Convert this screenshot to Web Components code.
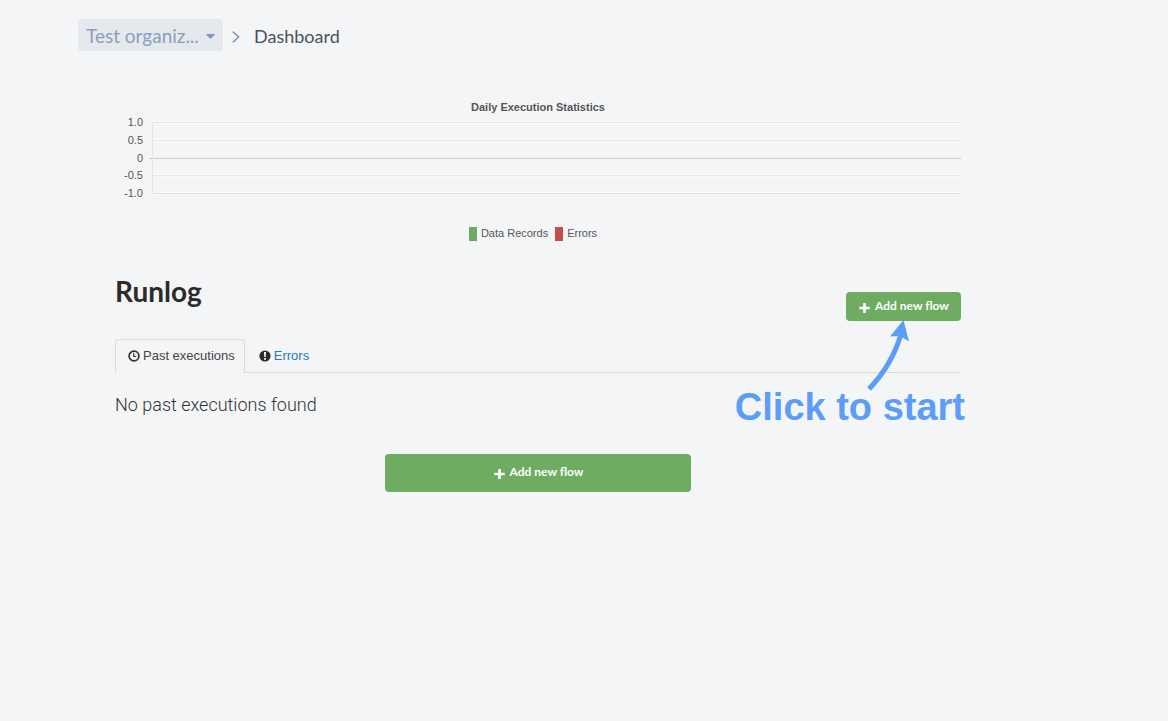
<!DOCTYPE html>
<html lang="en">
<head>
<meta charset="utf-8">
<meta name="viewport" content="width=device-width, initial-scale=1">
<title>Dashboard</title>
<style>
body { margin: 0; background: #f4f5f7; font-family: "Liberation Sans", Arial, sans-serif; color: #333; }
</style>
</head>
<body>
<flow-dashboard></flow-dashboard>
<script>
function define(name, html) {
  const template = document.createElement('template');
  template.innerHTML = html;
  customElements.define(name, class extends HTMLElement {
    constructor() {
      super();
      this.attachShadow({ mode: 'open' }).append(template.content.cloneNode(true));
    }
  });
}

define('crumb-bar', `
<style>
:host { display: block; font-family: Lato, sans-serif; }
nav { display: flex; align-items: center; color: #4a5260; font-size: 18px; line-height: 30px; }
.picker { display: flex; align-items: center; position: relative; width: 145px; height: 32px; background: #e5e8ed; border-radius: 4px; color: #8aa0bd; font-size: 19px; }
select { appearance: none; width: 100%; height: 100%; margin: 0; padding: 2px 24px 0 8px; border: 0; background: transparent; color: inherit; font: inherit; }
.caret { position: absolute; right: 8px; top: 15px; pointer-events: none; }
.sep { margin: 4px 13px 0 8px; }
nav > span { padding-top: 2px; }
</style>
<nav aria-label="Breadcrumb">
  <div class="picker">
    <select aria-label="Organization"><option>Test organiz...</option></select>
    <svg class="caret" width="9" height="5" viewBox="0 0 9 5"><path d="M.5 0h8q.5.4 0 .9L5.2 4.3q-.7.6-1.4 0L.5.9Q0 .4.5 0z" fill="#7f99bd"/></svg>
  </div>
  <svg class="sep" width="10" height="12" viewBox="0 0 10 12"><path d="M1.8.6 7.6 6 1.8 11.4" fill="none" stroke="#8298b8" stroke-width="1.5"/></svg>
  <span>Dashboard</span>
</nav>`);

define('stats-chart', `
<style>
:host { display: block; color: #555; font-size: 11px; line-height: 17px; }
h2 { margin: 0; padding-bottom: 1px; font-size: 11px; line-height: 12px; text-align: center; }
.plot { display: flex; flex-direction: column; justify-content: space-between; height: 88px; position: relative; }
.row { display: flex; align-items: center; height: 17px; flex: none; }
.row span { width: 28px; margin-right: 9px; text-align: right; }
.row i { flex: 1; height: 1px; background: #e5e6e8; border-top: 1px solid #fcfcfd; border-bottom: 1px solid #fafafb; }
.row.zero span { margin-right: 6px; }
.row.zero i { background: #cccdcf; border-color: transparent; background-clip: padding-box; }
.row.base i { background: #dcdddf; }
.axis { position: absolute; left: 37px; top: 8px; bottom: 8px; width: 1px; background: #e5e6e8; }
.legend { display: flex; justify-content: center; align-items: center; gap: 7px; padding: 23px 10px 0 0; }
.legend span { display: flex; align-items: center; gap: 4px; }
.legend b { width: 8px; height: 14px; }
</style>
<h2>Daily Execution Statistics</h2>
<div class="plot">
  <div class="axis"></div>
  <div class="row"><span>1.0</span><i></i></div>
  <div class="row"><span>0.5</span><i></i></div>
  <div class="row zero"><span>0</span><i></i></div>
  <div class="row"><span>-0.5</span><i></i></div>
  <div class="row base"><span>-1.0</span><i></i></div>
</div>
<div class="legend">
  <span><b style="background:#6cab61"></b>Data Records</span>
  <span><b style="background:#c44d48"></b>Errors</span>
</div>`);

define('flow-button', `
<style>
:host { display: block; height: 29px; }
button { display: flex; align-items: center; justify-content: center; gap: 5px; width: 100%; height: 100%; margin: 0; padding: 0 12px 2px 13px; border: 0; border-radius: 4px; background: #6dac61; color: #fff; font: 700 12px/18px Lato, sans-serif; white-space: nowrap; }
svg { margin-top: 4px; }
</style>
<button type="button"><svg width="11" height="10" viewBox="0 0 11 10"><path d="M5.5 0v10M.3 5h10.4" stroke="#fff" stroke-width="2.6"/></svg><slot></slot></button>`);

define('log-tabs', `
<style>
:host { display: block; font-size: 13px; line-height: 20px; }
nav { display: flex; height: 34px; box-shadow: inset 0 -1px #d9dadc; }
a { display: flex; align-items: center; gap: 3px; box-sizing: border-box; padding: 0 13px 2px; border: 1px solid transparent; border-bottom: 0; color: #1c7cc5; text-decoration: none; white-space: nowrap; }
a.active { padding: 0 9px 2px 12px; border-color: #d9dadc; border-radius: 4px 4px 0 0; background: #f4f5f7; color: #444; }
</style>
<nav aria-label="Run log">
  <a class="active" href="#past" aria-current="page"><svg width="12" height="12" viewBox="0 0 12 12" fill="none" stroke="#333"><circle cx="6" cy="6" r="4.9" stroke-width="1.7"/><path d="M5.7 3v3.500H8.300" stroke-width="1.100"/></svg>Past executions</a>
  <a href="#errors"><svg width="12" height="12" viewBox="0 0 12 12"><circle cx="6" cy="6" r="5.6" fill="#2b2b2b"/><path d="M5 2h2l-.3 5H5.3zM5.1 8h1.8v1.7H5.1z" fill="#fff"/></svg>Errors</a>
</nav>`);

define('start-hint', `
<style>
:host { display: block; color: #5c9df7; }
svg { display: block; margin-left: 129px; overflow: visible; }
p { margin: 0; font-size: 38px; line-height: 44px; font-weight: 700; white-space: nowrap; }
</style>
<svg width="50" height="65" viewBox="0 0 50 65"><path d="M5 69Q28 45 37 14" fill="none" stroke="#5c9df7" stroke-width="5"/><path d="M39.500 0 45 21.500 36 16 26 16.500z" fill="#5c9df7"/></svg>
<p>Click to start</p>`);

define('flow-dashboard', `
<style>
:host { display: block; padding: 19px 207px 40px 78px; }
main { padding: 50px 0 0 37px; }
.head { position: relative; display: flex; justify-content: space-between; align-items: flex-start; padding: 32px 0 18px; }
h1 { margin: 0; font: 700 28px/34px Lato, sans-serif; color: #2b2b2b; }
.head flow-button { width: 115px; margin-top: 18px; }
start-hint { position: absolute; right: -4px; top: 78px; pointer-events: none; }
.empty { margin: 20px 0 37px; font: 300 18px/24px Roboto, sans-serif; color: #333; }
.wide { width: 306px; height: 38px; margin: 0 auto; }
</style>
<crumb-bar></crumb-bar>
<main>
  <stats-chart></stats-chart>
  <div class="head">
    <h1>Runlog</h1>
    <flow-button>Add new flow</flow-button>
    <start-hint></start-hint>
  </div>
  <log-tabs></log-tabs>
  <p class="empty">No past executions found</p>
  <flow-button class="wide">Add new flow</flow-button>
</main>`);
</script>
</body>
</html>
